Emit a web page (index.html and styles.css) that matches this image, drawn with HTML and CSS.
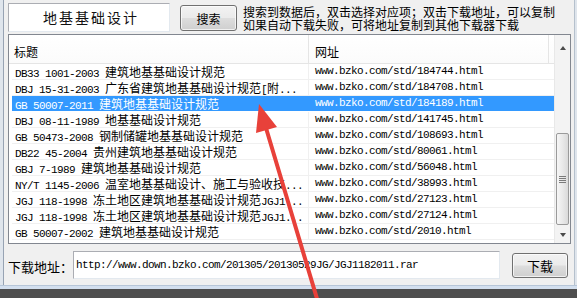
FILE: index.html
```html
<!DOCTYPE html>
<html lang="zh">
<head>
<meta charset="utf-8">
<title>标准下载</title>
<link rel="stylesheet" href="styles.css">
</head>
<body>
<div class="frame">
  <div class="toolbar">
    <div class="query">地基基础设计</div>
    <button class="btn btn-search">搜索</button>
    <div class="hint">
      <div class="hint-line">搜索到数据后，双击选择对应项；双击下载地址，可以复制</div>
      <div class="hint-line">如果自动下载失败，可将地址复制到其他下载器下载</div>
    </div>
  </div>
  <div class="list">
    <div class="list-main">
      <div class="row head"><div class="c1">标题</div><div class="c2">网址</div></div>
      <div class="row"><div class="c1"><span class="code">DB33 1001-2003 </span>建筑地基基础设计规范</div><div class="c2 code">www.bzko.com/std/184744.html</div></div>
      <div class="row"><div class="c1"><span class="code">DBJ 15-31-2003 </span>广东省建筑地基基础设计规范<span class="code">[</span>附<span class="code">...</span></div><div class="c2 code">www.bzko.com/std/184708.html</div></div>
      <div class="row selected"><div class="c1"><span class="code">GB 50007-2011 </span>建筑地基基础设计规范</div><div class="c2 code">www.bzko.com/std/184189.html</div></div>
      <div class="row"><div class="c1"><span class="code">DBJ 08-11-1989 </span>地基基础设计规范</div><div class="c2 code">www.bzko.com/std/141745.html</div></div>
      <div class="row"><div class="c1"><span class="code">GB 50473-2008 </span>钢制储罐地基基础设计规范</div><div class="c2 code">www.bzko.com/std/108693.html</div></div>
      <div class="row"><div class="c1"><span class="code">DB22 45-2004 </span>贵州建筑地基基础设计规范</div><div class="c2 code">www.bzko.com/std/80061.html</div></div>
      <div class="row"><div class="c1"><span class="code">GBJ 7-1989 </span>建筑地基基础设计规范</div><div class="c2 code">www.bzko.com/std/56048.html</div></div>
      <div class="row"><div class="c1"><span class="code">NY/T 1145-2006 </span>温室地基基础设计、施工与验收技<span class="code">...</span></div><div class="c2 code">www.bzko.com/std/38993.html</div></div>
      <div class="row"><div class="c1"><span class="code">JGJ 118-1998 </span>冻土地区建筑地基基础设计规范<span class="code">JGJ1...</span></div><div class="c2 code">www.bzko.com/std/27123.html</div></div>
      <div class="row"><div class="c1"><span class="code">JGJ 118-1998 </span>冻土地区建筑地基基础设计规范<span class="code">JGJ1...</span></div><div class="c2 code">www.bzko.com/std/27124.html</div></div>
      <div class="row"><div class="c1"><span class="code">GB 50007-2002 </span>建筑地基基础设计规范</div><div class="c2 code">www.bzko.com/std/2010.html</div></div>
    </div>
    <div class="scrollbar">
      <div class="sb-btn"><span class="arrow up"></span></div>
      <div class="sb-track-top"></div>
      <div class="sb-thumb"><span class="grip"></span></div>
      <div class="sb-track-bottom"></div>
      <div class="sb-btn sb-btn-down"><span class="arrow down"></span></div>
    </div>
  </div>
  <div class="dl-row">
    <span class="dl-label">下载地址：</span>
    <div class="dl-input code">http://www.down.bzko.com/201305/20130529JG/JGJ1182011.rar</div>
    <button class="btn btn-dl">下载</button>
  </div>
</div>
<div class="frame-bottom"></div>
<div class="taskbar"></div>
<svg class="annot" width="577" height="298" viewBox="0 0 577 298" aria-hidden="true">
  <line x1="318" y1="302" x2="266" y2="128" stroke="#e8413a" stroke-width="4" stroke-linecap="round"/>
  <polygon points="259,104 277,127 256,133" fill="#e8413a"/>
</svg>
</body>
</html>
```

FILE: styles.css
```css
* { box-sizing: border-box; }

html, body {
  margin: 0;
  padding: 0;
}

body {
  width: 577px;
  height: 298px;
  overflow: hidden;
  position: relative;
  display: flex;
  flex-direction: column;
  background: #dfe5ec;
  font-family: "Noto Sans CJK SC", "Liberation Sans", sans-serif;
  font-size: 12px;
  color: #000;
}

.frame {
  flex: none;
  height: 285px;
  margin-left: 3px;
  margin-right: 2px;
  border-left: 1px solid #97a3b3;
  border-right: 1px solid #b5c0cc;
  background: #f0f0f0;
  padding: 3px 0 0 4px;
}

.code {
  font-family: "Liberation Mono", monospace;
  font-size: 11px;
  letter-spacing: -0.6px;
  white-space: pre;
}

/* toolbar */
.toolbar {
  display: flex;
  align-items: flex-start;
  height: 30px;
}

.query {
  width: 162px;
  height: 29px;
  background: #fff;
  border: 1px solid #abadb3;
  border-right-color: #e3e9ef;
  border-bottom-color: #e3e9ef;
  padding-left: 34px;
  font-size: 14px;
  letter-spacing: 2px;
  line-height: 27px;
  color: #111;
}

.btn {
  font-family: "Noto Sans CJK SC", sans-serif;
  border: 1px solid #707070;
  border-radius: 3px;
  background: linear-gradient(#f2f2f2 0%, #ebebeb 48%, #dddddd 52%, #cfcfcf 100%);
  color: #000;
  padding: 0;
  box-shadow: inset 0 0 0 1px rgba(255,255,255,0.7);
}

.btn-search {
  width: 57px;
  height: 26px;
  margin-left: 10px;
  margin-top: 2px;
  font-size: 12px;
}

.hint {
  margin: 2px 0 0 6px;
  font-size: 12px;
  white-space: nowrap;
}

.hint-line {
  line-height: 13px;
}

/* list */
.list {
  margin-top: 1px;
  width: 563px;
  height: 210px;
  border: 1px solid #828790;
  background: #fff;
  display: grid;
  grid-template-columns: 1fr 16px;
}

.list-main {
  padding-left: 3px;
  overflow: hidden;
}

.row {
  display: grid;
  grid-template-columns: 296px 241px;
  height: 16px;
  line-height: 15px;
  border-bottom: 1px solid #f0f0f0;
  white-space: nowrap;
}

.row > div {
  overflow: hidden;
}

.c1 {
  padding-left: 3px;
}

.c2 {
  border-left: 1px solid #f0f0f0;
  padding-left: 6px;
}

.row.head {
  height: 29px;
  line-height: 16px;
  border-bottom: 1px solid #e5e5e5;
  margin-left: -3px;
  padding-left: 3px;
  background: linear-gradient(#ffffff, #fbfbfb);
}

.row.head > div {
  padding-top: 9px;
}

.row.head .c1 {
  padding-left: 2px;
}

.row.head .c2 {
  border-left: 1px solid #e5e5e5;
  border-right: 1px solid #e5e5e5;
}

.row.selected {
  background: #3399ff;
  color: #fff;
  border-bottom-color: #fff;
}

.row.selected .c2 {
  border-left-color: #3399ff;
}

/* scrollbar */
.scrollbar {
  display: flex;
  flex-direction: column;
  background: #f3f3f3;
  border-left: 1px solid #e8e8e8;
}

.sb-btn {
  height: 26px;
  display: flex;
  align-items: center;
  justify-content: center;
}

.sb-btn-down {
  height: 16px;
}

.sb-track-top { height: 72px; }
.sb-track-bottom { height: 2px; }

.arrow {
  width: 0;
  height: 0;
  border-left: 3.5px solid transparent;
  border-right: 3.5px solid transparent;
}

.arrow.up { border-bottom: 4px solid #4a4a4a; }
.arrow.down { border-top: 4px solid #4a4a4a; }

.sb-thumb {
  height: 92px;
  margin: 0 1px;
  border: 1px solid #9a9a9a;
  border-radius: 2px;
  background: linear-gradient(90deg, #f6f6f6, #e9e9e9 50%, #dadada);
  display: flex;
  align-items: center;
  justify-content: center;
}

.grip {
  width: 7px;
  height: 7px;
  background: repeating-linear-gradient(#7a7a7a 0 1px, transparent 1px 2px);
}

/* download row */
.dl-row {
  display: flex;
  align-items: center;
  margin-top: 7px;
  height: 28px;
}

.dl-label {
  width: 65px;
  font-size: 13px;
  white-space: nowrap;
  padding-top: 3px;
}

.dl-input {
  width: 427px;
  height: 28px;
  background: #fff;
  border: 1px solid #abadb3;
  border-right-color: #e3e9ef;
  border-bottom-color: #e3e9ef;
  padding-left: 2px;
  line-height: 26px;
}

.btn-dl {
  width: 56px;
  height: 25px;
  margin-left: 12px;
  font-size: 13px;
}

.frame-bottom {
  flex: none;
  height: 4px;
  background: #d3dfee;
  border-top: 1px solid #b7c6d8;
}

.taskbar {
  flex: 1;
  background: #4e4e4e;
}

.annot {
  position: absolute;
  left: 0;
  top: 0;
  pointer-events: none;
}
```
